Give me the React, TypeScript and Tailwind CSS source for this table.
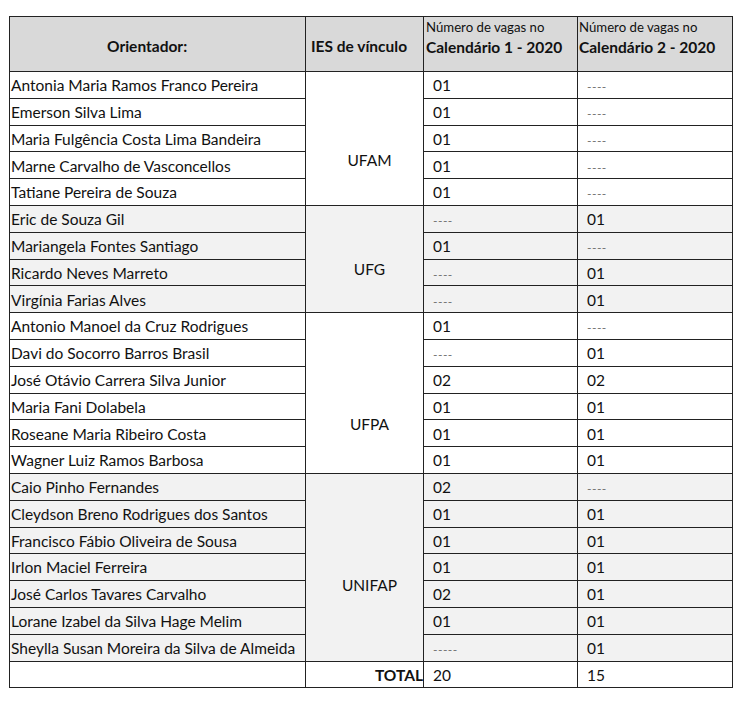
const groups = [
  {
    ies: "UFAM",
    shade: false,
    pad: "pt-[44px]",
    rows: [
      ["Antonia Maria Ramos Franco Pereira", "01", "----"],
      ["Emerson Silva Lima", "01", "----"],
      ["Maria Fulgência Costa Lima Bandeira", "01", "----"],
      ["Marne Carvalho de Vasconcellos", "01", "----"],
      ["Tatiane Pereira de Souza", "01", "----"],
    ],
  },
  {
    ies: "UFG",
    shade: true,
    pad: "pt-[22px]",
    rows: [
      ["Eric de Souza Gil", "----", "01"],
      ["Mariangela Fontes Santiago", "01", "----"],
      ["Ricardo Neves Marreto", "----", "01"],
      ["Virgínia Farias Alves", "----", "01"],
    ],
  },
  {
    ies: "UFPA",
    shade: false,
    pad: "pt-[64px]",
    rows: [
      ["Antonio Manoel da Cruz Rodrigues", "01", "----"],
      ["Davi do Socorro Barros Brasil", "----", "01"],
      ["José Otávio Carrera Silva Junior", "02", "02"],
      ["Maria Fani Dolabela", "01", "01"],
      ["Roseane Maria Ribeiro Costa", "01", "01"],
      ["Wagner Luiz Ramos Barbosa", "01", "01"],
    ],
  },
  {
    ies: "UNIFAP",
    shade: true,
    pad: "pt-[38px]",
    rows: [
      ["Caio Pinho Fernandes", "02", "----"],
      ["Cleydson Breno Rodrigues dos Santos", "01", "01"],
      ["Francisco Fábio Oliveira de Sousa", "01", "01"],
      ["Irlon Maciel Ferreira", "01", "01"],
      ["José Carlos Tavares Carvalho", "02", "01"],
      ["Lorane Izabel da Silva Hage Melim", "01", "01"],
      ["Sheylla Susan Moreira da Silva de Almeida", "-----", "01"],
    ],
  },
];

const Vagas = ({ value }: { value: string }) =>
  value.startsWith("-") ? (
    <span className="text-[#6f6f6f] text-[12px] tracking-[0.5px]">{value}</span>
  ) : (
    <span>{value}</span>
  );

export default function App() {
  return (
    <div className="bg-white w-[749px] h-[706px] pt-[16px] pl-[9px] text-[#111]" style={{ fontFamily: "Lato, 'Open Sans', sans-serif" }}>
      <table className="table-fixed border-collapse w-[723px] text-[15.5px] leading-none">
        <colgroup>
          <col className="w-[296px]" />
          <col className="w-[118px]" />
          <col className="w-[154px]" />
          <col className="w-[155px]" />
        </colgroup>
        <thead>
          <tr className="h-[55px] bg-[#d9d9d9]">
            <th className="border border-[#222] font-bold text-left align-middle pl-[97px] pt-[5px]">Orientador:</th>
            <th className="border border-[#222] font-bold text-left align-middle pl-[5px] pt-[5px] whitespace-nowrap">IES de vínculo</th>
            <th className="border border-[#222] text-left align-top pl-[2px] pt-[4px] whitespace-nowrap">
              <div className="text-[13.2px] font-normal">Número de vagas no</div>
              <div className="font-bold mt-[6px]">Calendário 1 - 2020</div>
            </th>
            <th className="border border-[#222] text-left align-top pl-[1px] pt-[4px] whitespace-nowrap">
              <div className="text-[13.2px] font-normal">Número de vagas no</div>
              <div className="font-bold mt-[6px]">Calendário 2 - 2020</div>
            </th>
          </tr>
        </thead>
        <tbody>
          {groups.map((group) =>
            group.rows.map(([name, cal1, cal2], i) => (
              <tr key={name} className={`h-[26.8px] ${group.shade ? "bg-[#f2f2f2]" : "bg-white"}`}>
                <td className="border border-[#222] pl-[1px] pt-[2px] align-middle whitespace-nowrap">{name}</td>
                {i === 0 && (
                  <td rowSpan={group.rows.length} className={`border border-[#222] text-center align-middle pl-[10px] ${group.pad}`}>
                    {group.ies}
                  </td>
                )}
                <td className="border border-[#222] pl-[9px] pt-[2px] align-middle">
                  <Vagas value={cal1} />
                </td>
                <td className="border border-[#222] pl-[9px] pt-[2px] align-middle">
                  <Vagas value={cal2} />
                </td>
              </tr>
            ))
          )}
          <tr className="h-[26.8px] bg-white">
            <td className="border border-[#222]"></td>
            <td className="border border-[#222] text-right font-bold pr-0 pt-[2px]">TOTAL</td>
            <td className="border border-[#222] pl-[9px] pt-[2px]">20</td>
            <td className="border border-[#222] pl-[9px] pt-[2px]">15</td>
          </tr>
        </tbody>
      </table>
    </div>
  );
}
